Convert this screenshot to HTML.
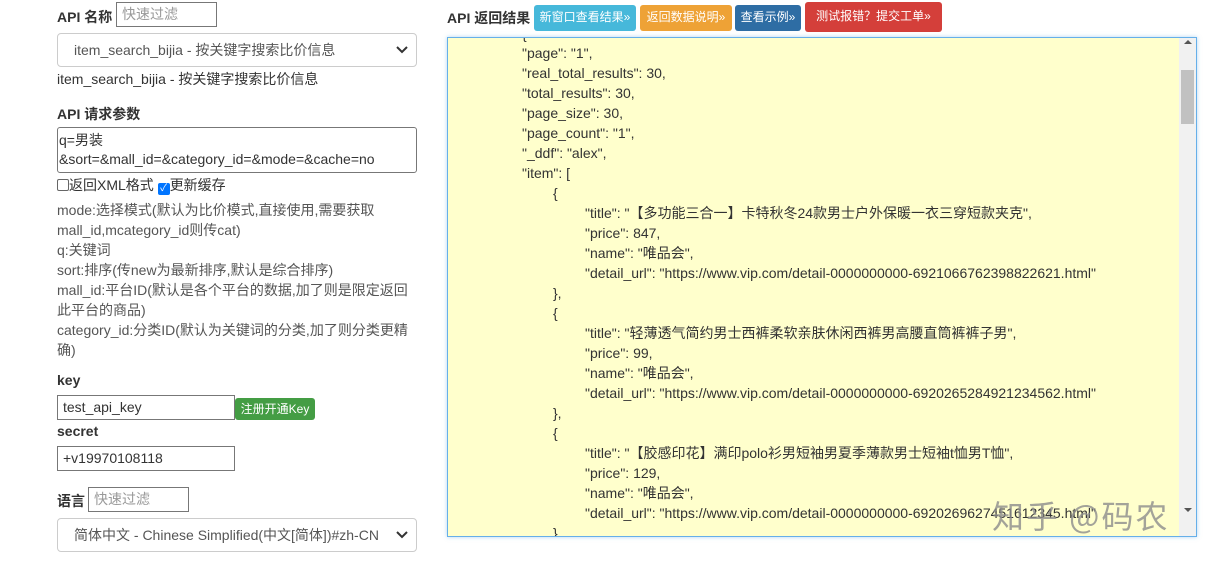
<!DOCTYPE html>
<html><head><meta charset="utf-8"><style>
*{box-sizing:border-box}
body{margin:0;width:1210px;height:564px;overflow:hidden;background:#fff;font-family:"Liberation Sans","Noto Sans CJK SC",sans-serif;font-size:14px;color:#333;position:relative}
.a{position:absolute;white-space:nowrap}
.b{font-weight:bold}
.inp{position:absolute;border:1px solid #777;background:#fff;padding:0 5px;font-size:14px;line-height:23px;height:25px}
.ph{color:#999}
.sel{position:absolute;border:1px solid #ccc;border-radius:4px;background:#fff;height:34px;line-height:32px;padding-left:16px;color:#555}
.sel svg{position:absolute;right:8px;top:12px}
.btn{position:absolute;color:#fff;font-size:12px;border-radius:3px;text-align:center;line-height:24px;height:26px}
.g{color:#555;font-size:14px;line-height:20px}
.res{position:absolute;left:447px;top:37px;width:750px;height:500px;border:1px solid #66afe9;background:#ffffcc;overflow:hidden;box-shadow:0 0 4px rgba(102,175,233,.5)}
.l{position:absolute;white-space:nowrap;font-size:14px;color:#333;line-height:20px;height:20px}
</style></head><body>
<div class="a b" style="left:57px;top:7px">API 名称</div>
<div class="inp ph" style="left:116px;top:2px;width:101px">快速过滤</div>
<div class="sel" style="left:57px;top:33px;width:360px">item_search_bijia - 按关键字搜索比价信息<svg width="12" height="8"><path d="M1 1l5 5 5-5" stroke="#333" stroke-width="2" fill="none"/></svg></div>
<div class="a" style="left:57px;top:69px">item_search_bijia - 按关键字搜索比价信息</div>
<div class="a b" style="left:57px;top:104px">API 请求参数</div>
<div style="position:absolute;left:57px;top:127px;width:360px;height:46px;border:1px solid #777;border-radius:3px;padding:3px 1px;line-height:19px">q=男装<br>&amp;sort=&amp;mall_id=&amp;category_id=&amp;mode=&amp;cache=no</div>
<div class="a" style="left:57px;top:176px;line-height:18px"><span style="display:inline-block;width:12px;height:12px;border:1px solid #666;border-radius:2px;vertical-align:-1px"></span>返回XML格式 <span style="display:inline-block;width:12px;height:12px;background:#0075ff;border-radius:2px;vertical-align:-1px;color:#fff;font-size:10px;line-height:12px;text-align:center">✓</span>更新缓存</div>
<div class="a g" style="left:57px;top:200px;white-space:normal;width:358px">mode:选择模式(默认为比价模式,直接使用,需要获取mall_id,mcategory_id则传cat)<br>q:关键词<br>sort:排序(传new为最新排序,默认是综合排序)<br>mall_id:平台ID(默认是各个平台的数据,加了则是限定返回此平台的商品)<br>category_id:分类ID(默认为关键词的分类,加了则分类更精确)</div>
<div class="a b" style="left:57px;top:372px">key</div>
<div class="inp" style="left:57px;top:395px;width:178px">test_api_key</div>
<div class="btn" style="left:235px;top:398px;width:80px;height:22px;line-height:22px;background:#449d44">注册开通Key</div>
<div class="a b" style="left:57px;top:423px">secret</div>
<div class="inp" style="left:57px;top:446px;width:178px">+v19970108118</div>
<div class="a b" style="left:57px;top:491px">语言</div>
<div class="inp ph" style="left:88px;top:487px;width:101px">快速过滤</div>
<div class="sel" style="left:57px;top:518px;width:360px">简体中文 - Chinese Simplified(中文[简体])#zh-CN<svg width="12" height="8"><path d="M1 1l5 5 5-5" stroke="#333" stroke-width="2" fill="none"/></svg></div>

<div class="a b" style="left:447px;top:8px">API 返回结果</div>
<div class="btn" style="left:534px;top:5px;width:102px;background:#46b8da">新窗口查看结果»</div>
<div class="btn" style="left:640px;top:5px;width:92px;background:#eea236">返回数据说明»</div>
<div class="btn" style="left:735px;top:5px;width:66px;background:#2e6da4">查看示例»</div>
<div class="btn" style="left:805px;top:2px;width:137px;height:30px;line-height:28px;background:#d43f3a">测试报错？提交工单»</div>

<div class="res">
<div class="l" style="left:74px;top:-14px">{</div>
<div class="l" style="left:74px;top:5px">"page": "1",</div>
<div class="l" style="left:74px;top:25px">"real_total_results": 30,</div>
<div class="l" style="left:74px;top:45px">"total_results": 30,</div>
<div class="l" style="left:74px;top:65px">"page_size": 30,</div>
<div class="l" style="left:74px;top:85px">"page_count": "1",</div>
<div class="l" style="left:74px;top:105px">"_ddf": "alex",</div>
<div class="l" style="left:74px;top:125px">"item": [</div>
<div class="l" style="left:105px;top:145px">{</div>
<div class="l" style="left:137px;top:165px">"title": "【多功能三合一】卡特秋冬24款男士户外保暖一衣三穿短款夹克",</div>
<div class="l" style="left:137px;top:185px">"price": 847,</div>
<div class="l" style="left:137px;top:205px">"name": "唯品会",</div>
<div class="l" style="left:137px;top:225px">"detail_url": "https://www.vip.com/detail-0000000000-6921066762398822621.html"</div>
<div class="l" style="left:105px;top:245px">},</div>
<div class="l" style="left:105px;top:265px">{</div>
<div class="l" style="left:137px;top:285px">"title": "轻薄透气简约男士西裤柔软亲肤休闲西裤男高腰直筒裤裤子男",</div>
<div class="l" style="left:137px;top:305px">"price": 99,</div>
<div class="l" style="left:137px;top:325px">"name": "唯品会",</div>
<div class="l" style="left:137px;top:345px">"detail_url": "https://www.vip.com/detail-0000000000-6920265284921234562.html"</div>
<div class="l" style="left:105px;top:365px">},</div>
<div class="l" style="left:105px;top:385px">{</div>
<div class="l" style="left:137px;top:405px">"title": "【胶感印花】满印polo衫男短袖男夏季薄款男士短袖t恤男T恤",</div>
<div class="l" style="left:137px;top:425px">"price": 129,</div>
<div class="l" style="left:137px;top:445px">"name": "唯品会",</div>
<div class="l" style="left:137px;top:465px">"detail_url": "https://www.vip.com/detail-0000000000-6920269627451612345.html"</div>
<div class="l" style="left:105px;top:485px">}</div>
<div style="position:absolute;right:0;top:0;width:17px;height:498px;background:#f1f1f1"></div>
<div style="position:absolute;right:2px;top:32px;width:13px;height:54px;background:#c1c1c1"></div>
<div style="position:absolute;right:4px;top:2px;width:0;height:0;border:4px solid transparent;border-bottom-color:#555;border-top:0"></div>
<div style="position:absolute;right:4px;top:470px;width:0;height:0;border:4px solid transparent;border-top-color:#555;border-bottom:0"></div>
</div>
<div class="a" style="left:992px;top:492px;font-size:32px;color:rgba(140,140,140,.8);font-family:'Noto Sans CJK SC',sans-serif;letter-spacing:2px">知乎 @码农</div>
</body></html>
